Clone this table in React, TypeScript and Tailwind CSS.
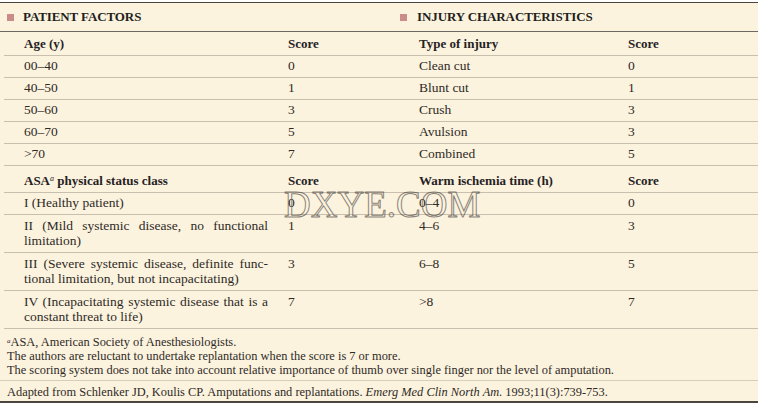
import { ReactNode } from 'react';

type Row = { cells: ReactNode[]; head?: boolean; tall?: boolean };

const rows: Row[] = [
  { cells: ['Age (y)', 'Score', 'Type of injury', 'Score'], head: true },
  { cells: ['00–40', '0', 'Clean cut', '0'] },
  { cells: ['40–50', '1', 'Blunt cut', '1'] },
  { cells: ['50–60', '3', 'Crush', '3'] },
  { cells: ['60–70', '5', 'Avulsion', '3'] },
  { cells: ['>70', '7', 'Combined', '5'] },
  {
    cells: [
      <>
        ASA<sup className="text-[8px] italic font-normal">a</sup> physical status class
      </>,
      'Score',
      'Warm ischemia time (h)',
      'Score',
    ],
    head: true,
  },
  { cells: ['I (Healthy patient)', '0', '0–4', '0'] },
  { cells: ['II (Mild systemic disease, no functional limitation)', '1', '4–6', '3'], tall: true },
  {
    cells: ['III (Severe systemic disease, definite func\u00ADtional limitation, but not incapacitating)', '3', '6–8', '5'],
    tall: true,
  },
  { cells: ['IV (Incapacitating systemic disease that is a constant threat to life)', '7', '>8', '7'], tall: true },
];

const Bullet = () => <span className="inline-block w-[7px] h-[7px] bg-[#c98c8a]" />;

export default function App() {
  return (
    <div className="w-[764px] h-[406px] bg-white pt-[2px] font-['Liberation_Serif',serif] text-[#2e2a26]">
      <div className="relative w-[758px] h-[401px] bg-[#fcf3df] border-t border-b-2 border-[#4a4540] flex flex-col">
        <div className="flex h-[29px] items-center border-b border-[#6e6862]">
          <div className="w-[400px] flex items-center gap-[9px] pl-[7px]">
            <Bullet />
            <span className="text-[13px] font-bold tracking-[-0.1px] text-[#231f1c]">PATIENT FACTORS</span>
          </div>
          <div className="flex items-center gap-[10px]">
            <Bullet />
            <span className="text-[13px] font-bold tracking-[-0.1px] text-[#231f1c]">INJURY CHARACTERISTICS</span>
          </div>
        </div>

        {rows.map((r, i) => (
          <div
            key={i}
            className={`ml-[4px] grid grid-cols-[284px_131px_209px_1fr] border-b border-[#c9bfae] ${
              r.head ? 'font-bold text-[13px] text-[#26221f]' : 'text-[13.5px]'
            } ${
              r.tall
                ? 'py-[4px] leading-[14.5px]'
                : r.head
                ? i === 0
                  ? 'h-[24px] items-center'
                  : 'h-[27px] items-center pt-[3px]'
                : 'h-[22px] items-center'
            }`}
          >
            <div className="pl-[20px] pr-[20px] text-justify">{r.cells[0]}</div>
            <div>{r.cells[1]}</div>
            <div>{r.cells[2]}</div>
            <div>{r.cells[3]}</div>
          </div>
        ))}

        <div className="pl-[7px] pt-[6px] pb-[3px] text-[12.4px] leading-[14px] border-b border-[#d6cdbd]">
          <div>
            <sup className="text-[7px] italic">a</sup>ASA, American Society of Anesthesiologists.
          </div>
          <div>The authors are reluctant to undertake replantation when the score is 7 or more.</div>
          <div>The scoring system does not take into account relative importance of thumb over single finger nor the level of amputation.</div>
        </div>
        <div className="pl-[7px] pt-[4px] text-[12.4px] leading-[14px]">
          Adapted from Schlenker JD, Koulis CP. Amputations and replantations. <i>Emerg Med Clin North Am.</i> 1993;11(3):739-753.
        </div>

        <div className="absolute left-[284px] top-[183px] text-[37px] leading-none text-transparent opacity-60 [-webkit-text-stroke:1px_#3d3935] pointer-events-none">
          DXYE.COM
        </div>
      </div>
    </div>
  );
}
